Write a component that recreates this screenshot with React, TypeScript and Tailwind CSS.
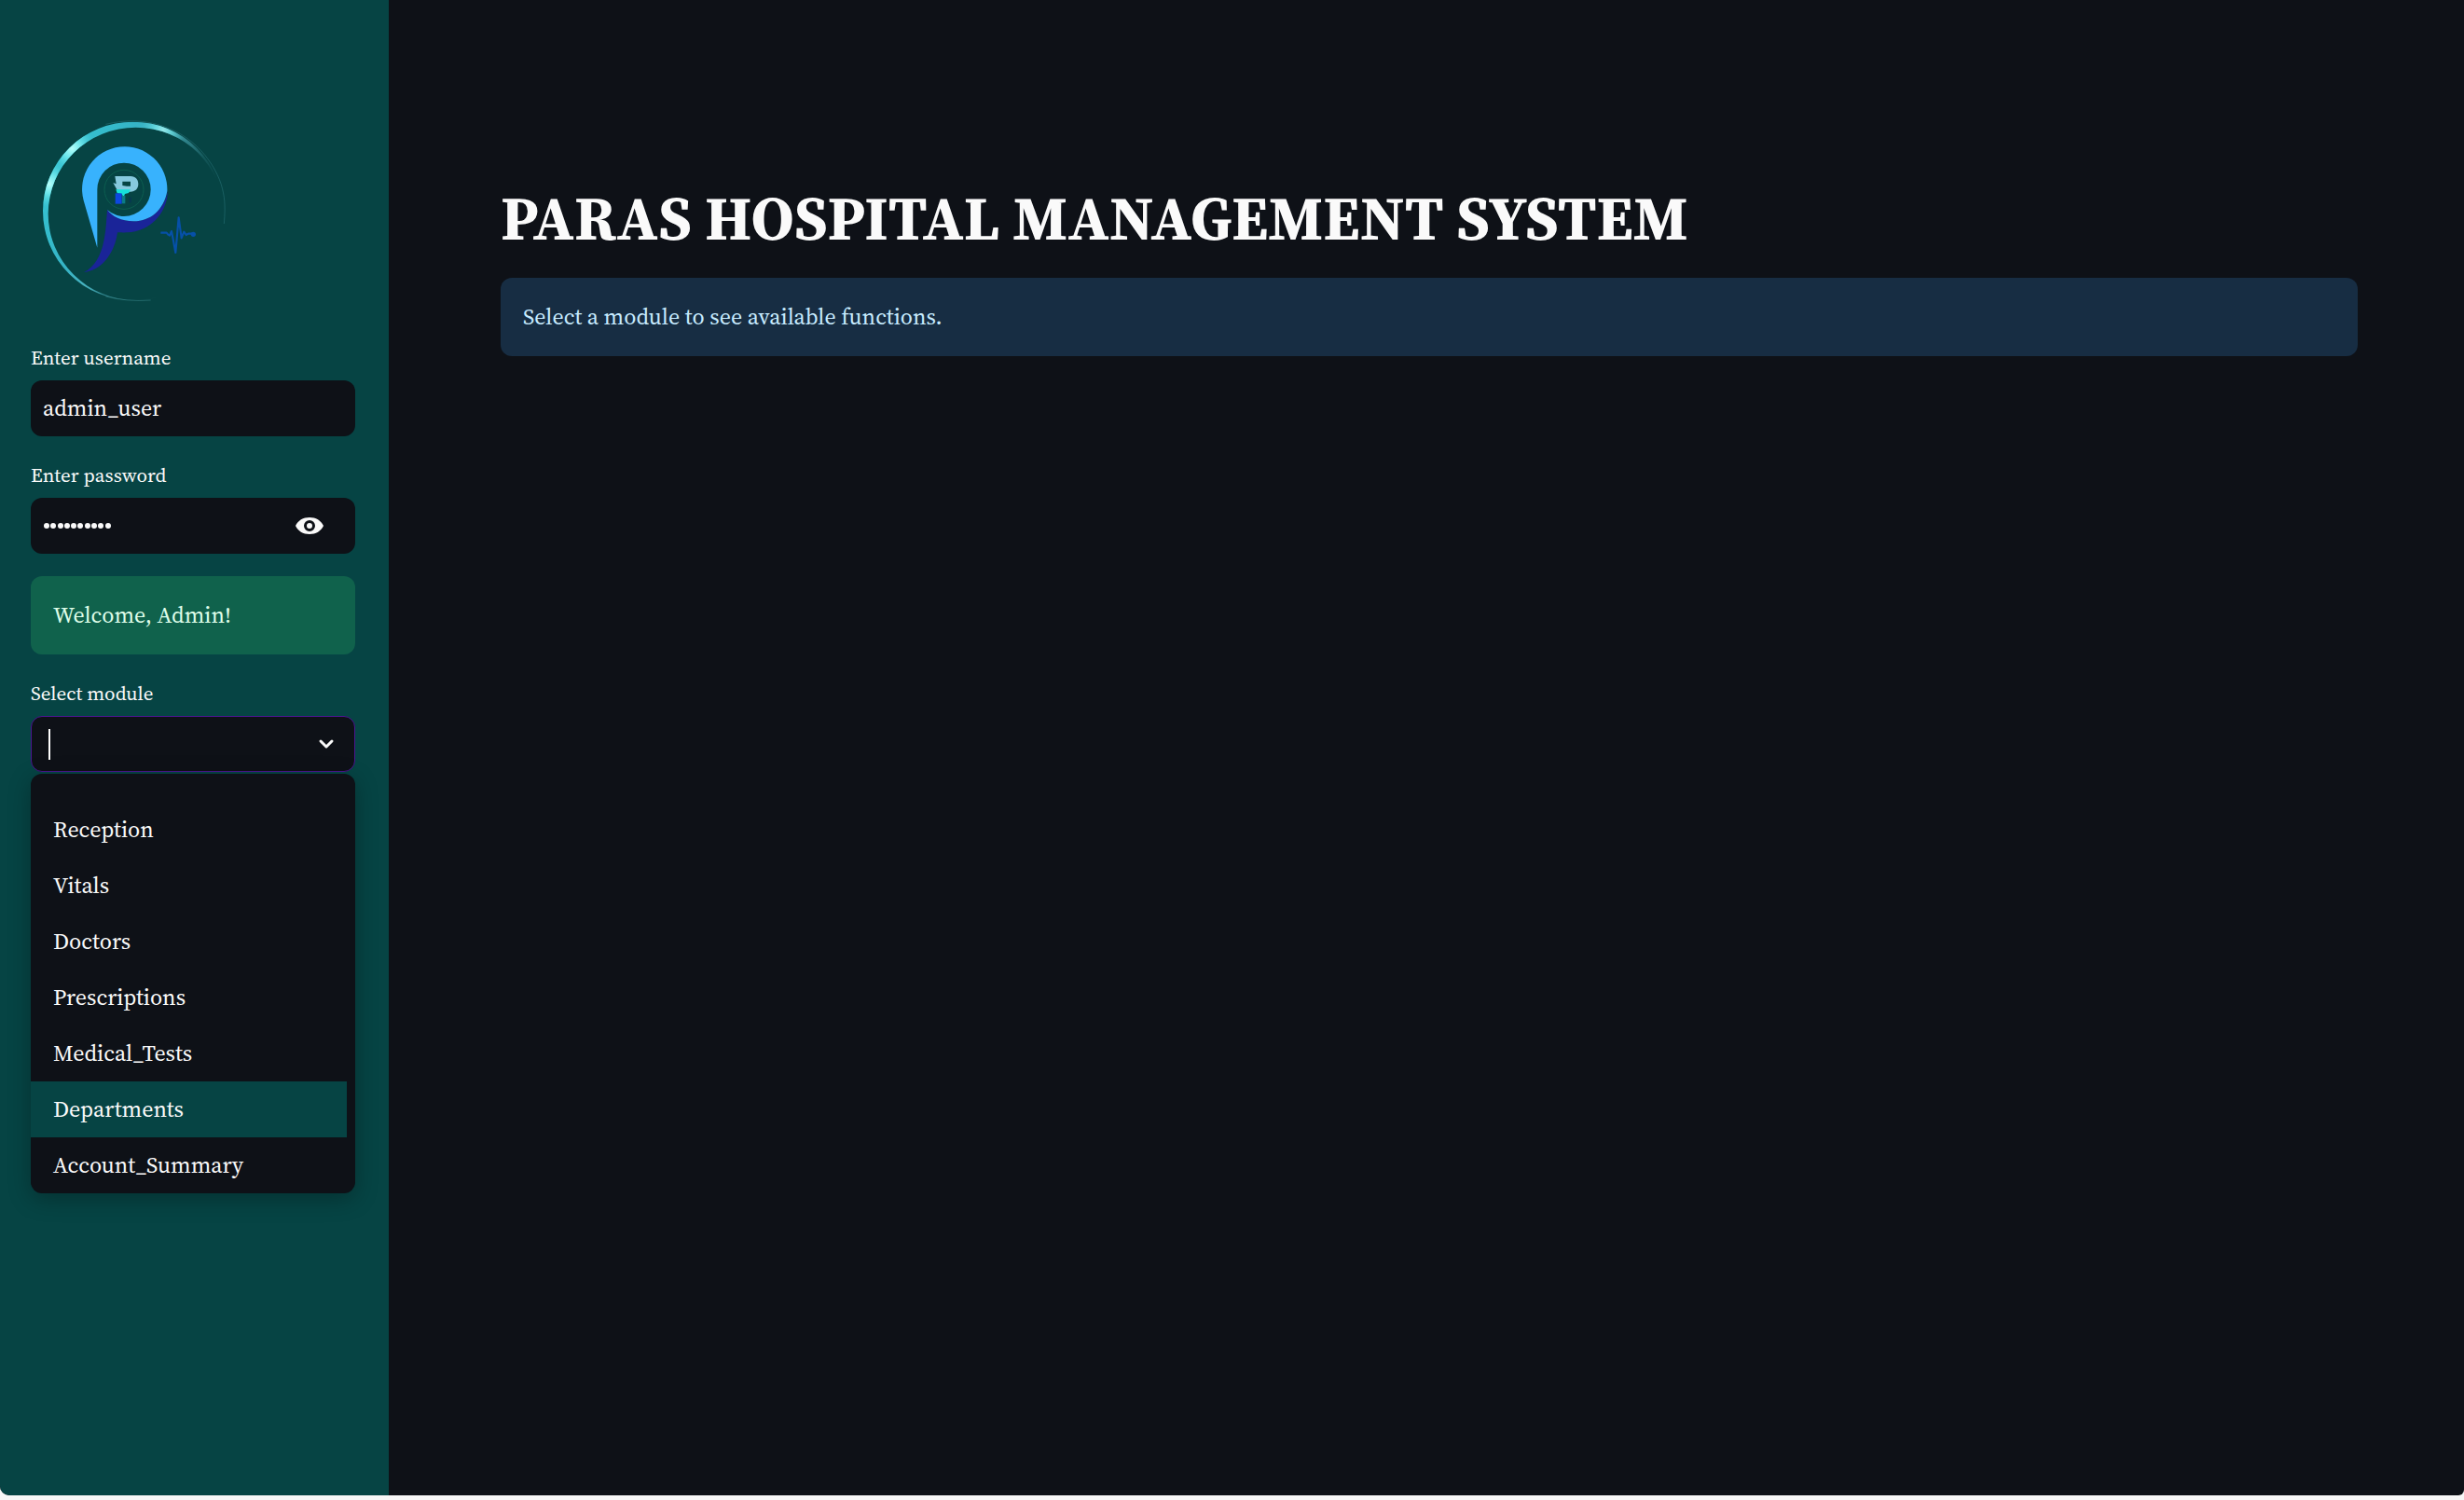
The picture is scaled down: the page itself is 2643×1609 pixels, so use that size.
const MODULES = [
  "Reception",
  "Vitals",
  "Doctors",
  "Prescriptions",
  "Medical_Tests",
  "Departments",
  "Account_Summary",
];

function Logo() {
  return (
    <svg viewBox="0 0 660 690" className="h-[230px] w-[220px]" fill="none">
      <defs>
        <linearGradient id="ring" x1="48" y1="262" x2="510" y2="493" gradientUnits="userSpaceOnUse">
          <stop offset="0" stopColor="#35c3d2" />
          <stop offset="0.35" stopColor="#35b4c6" />
          <stop offset="0.52" stopColor="#4bb8c6" stopOpacity="0.95" />
          <stop offset="0.72" stopColor="#3f98a2" stopOpacity="0.6" />
          <stop offset="0.83" stopColor="#2f8088" stopOpacity="0.3" />
          <stop offset="0.95" stopColor="#2f8088" stopOpacity="0" />
        </linearGradient>
        <radialGradient id="glow">
          <stop offset="0" stopColor="#b8fffb" />
          <stop offset="0.4" stopColor="#7df0f2" stopOpacity="0.8" />
          <stop offset="1" stopColor="#4fd8e0" stopOpacity="0" />
        </radialGradient>
        <clipPath id="crescent">
          <path
            clipRule="evenodd"
            d="M48 349a290 287 0 1 0 580 0a290 287 0 1 0 -580 0zM65 358a282 278 0 1 0 564 0a282 278 0 1 0 -564 0z"
          />
        </clipPath>
      </defs>
      <g clipPath="url(#crescent)">
        <rect width="660" height="690" fill="url(#ring)" />
        <circle cx="142" cy="148" r="75" fill="url(#glow)" />
        <circle cx="68" cy="262" r="75" fill="url(#glow)" />
        <circle cx="435" cy="88" r="70" fill="url(#glow)" opacity="0.7" />
      </g>
      <path d="M250 70C380 38 500 82 570 170S636 330 631 390" stroke="#3b8f98" strokeWidth="3" opacity="0.35" />
      <path d="M250 624Q320 642 395 636" stroke="#4fa5ac" strokeWidth="3" opacity="0.35" />
      <path
        d="M255 345C270 365 300 382 340 382C395 382 437 345 450 285C447 360 390 415 320 418C305 419 295 417 288 418C280 480 240 540 180 546C215 530 235 490 243 450C252 410 252 380 255 345Z"
        fill="#1a2498"
      />
      <path
        d="M223 467L179 315A137 137 0 1 1 448 285C437 345 395 382 340 382C300 381 270 366 255 345C271 358 288 366 309 366A86 86 0 1 0 223 280Z"
        fill="#38b2fd"
      />
      <circle cx="309" cy="280" r="63" stroke="#0c5e50" strokeWidth="3" />
      <path
        fillRule="evenodd"
        d="M280 237H330C347 237 355 248 355 262C355 278 345 287 330 287H292L285 278L274 258L284 262ZM304 254V267L318 269H330V254Z"
        fill="#86c9de"
      />
      <path d="M283 280H330L324 291L312 294L308 304L301 294L287 292Z" fill="#16e0dc" />
      <path d="M281 292H302V326H281Z" fill="#0d47e0" />
      <path d="M303 300H313V325H303Z" fill="#0b7c86" />
      <path d="M325 305H333V322H325Z" fill="#07394f" />
      <path
        d="M427 419H446L451 425L456 428L462 414L467 440L475 483L485 370L494 436L502 416L509 426L516 422H532"
        stroke="#0650a8"
        strokeWidth="6.500"
        strokeLinejoin="round"
      />
      <circle cx="532" cy="424" r="8" fill="#0650a8" />
    </svg>
  );
}

function Label({ children }: { children: string }) {
  return <div className="mb-[9px] flex h-[30px] items-center text-[21px]">{children}</div>;
}

export default function App() {
  return (
    <div className="h-[1609px] w-[2643px] overflow-hidden bg-[#f7f7f7] font-['Source_Serif_4','Source_Serif_Pro','Liberation_Serif',serif] text-2xl text-[#fafafa]">
      <div className="flex h-[1604px] overflow-hidden rounded-br-md rounded-bl-[10px] bg-[#0e1117]">
        <aside className="w-[417px] shrink-0 bg-[#064444] pr-9 pl-[33px]">
          <div className="-ml-[3px] pt-[110px]">
            <Logo />
          </div>
          <div className="mt-[29px]">
            <Label>Enter username</Label>
            <div className="flex h-[60px] items-center rounded-xl bg-[#0e1117] px-[13px]">admin_user</div>
          </div>
          <div className="mt-[27px]">
            <Label>Enter password</Label>
            <div className="flex h-[60px] items-center justify-between rounded-xl bg-[#0e1117] pr-[31px] pl-3.5">
              <div className="flex gap-[1.3px]">
                {Array.from({ length: 10 }, (_, i) => (
                  <span key={i} className="size-[6px] rounded-full bg-[#fafafa]" />
                ))}
              </div>
              <svg viewBox="0 0 24 24" className="size-9" fill="#fafafa">
                <path d="M12 6C7.5 6 3.7 8.2 2 12c1.7 3.8 5.500 6 10 6s8.300-2.200 10-6c-1.700-3.800-5.500-6-10-6zm0 10a4 4 0 1 1 0-8 4 4 0 0 1 0 8zm0-6a2 2 0 1 0 0 4 2 2 0 0 0 0-4z" />
              </svg>
            </div>
          </div>
          <div className="mt-6 flex h-[84px] items-center rounded-xl bg-[#10624c] px-6 text-[#dffde9]">
            Welcome, Admin!
          </div>
          <div className="mt-[27px]">
            <Label>Select module</Label>
            <div className="relative flex h-[60px] items-center justify-between rounded-xl border border-[#4b1590] bg-[#0e1117] px-[18px]">
              <span className="mt-px h-[33px] w-[2px] bg-white" />
              <svg viewBox="0 0 24 24" className="size-6" fill="none" stroke="#fafafa" strokeWidth="3" strokeLinecap="round" strokeLinejoin="round">
                <path d="M6 9l6 6l6-6" />
              </svg>
              <div className="absolute top-[61px] -left-px h-[450px] w-[348px] overflow-visible rounded-xl bg-[#0e1117] pt-[30px] shadow-[0_6px_24px_rgba(0,0,0,0.28)]">
                <ul>
                  {MODULES.map((name) => (
                    <li
                      key={name}
                      className={
                        name === "Departments"
                          ? "mr-[9px] flex h-[60px] items-center bg-[#064444] pl-6"
                          : "mr-[9px] flex h-[60px] items-center pl-6"
                      }
                    >
                      {name}
                    </li>
                  ))}
                </ul>
              </div>
            </div>
          </div>
        </aside>
        <main className="flex-1 pr-[114px] pl-[120px]">
          <h1 className="mt-[195px] h-[79px] text-[66px] leading-[79px] font-bold">
            PARAS HOSPITAL MANAGEMENT SYSTEM
          </h1>
          <div className="mt-6 flex h-[84px] items-center rounded-xl bg-[#172d43] px-6 text-[#c7ebff]">
            Select a module to see available functions.
          </div>
        </main>
      </div>
    </div>
  );
}
